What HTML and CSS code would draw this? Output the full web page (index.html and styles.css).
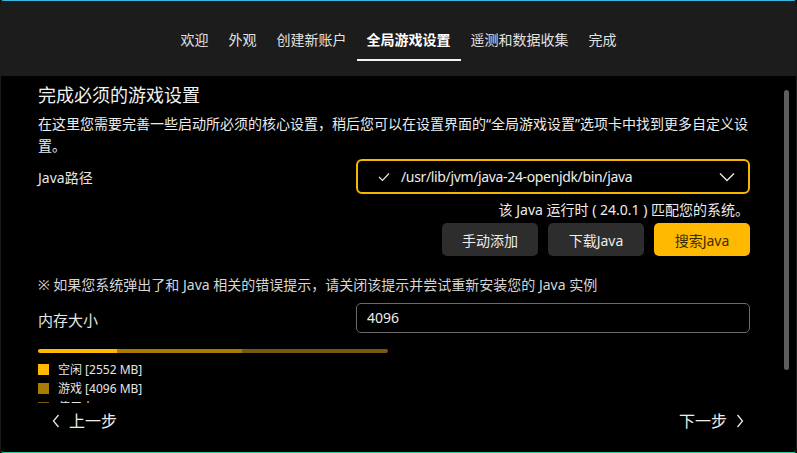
FILE: index.html
```html
<!DOCTYPE html>
<html lang="zh-CN">
<head>
<meta charset="utf-8">
<title>全局游戏设置</title>
<link rel="stylesheet" href="styles.css">
</head>
<body>
<div class="window">
  <header class="topbar">
    <nav class="tabs">
      <span class="tab">欢迎</span>
      <span class="tab">外观</span>
      <span class="tab">创建新账户</span>
      <span class="tab active">全局游戏设置</span>
      <span class="tab">遥测和数据收集</span>
      <span class="tab">完成</span>
    </nav>
  </header>
  <main class="content">
    <div class="scroll">
      <h1 class="title">完成必须的游戏设置</h1>
      <p class="desc">在这里您需要完善一些启动所必须的核心设置，稍后您可以在设置界面的“全局游戏设置”选项卡中找到更多自定义设置。</p>
      <div class="row java-row">
        <span class="label">Java路径</span>
        <div class="select">
          <svg class="check" width="12" height="10" viewBox="0 0 12 10"><polyline points="1,5 4.5,8.5 11,1.5" fill="none" stroke="#e8e8e8" stroke-width="1.2"/></svg>
          <span class="select-text">/usr/lib/jvm/java-24-openjdk/bin/java</span>
          <svg class="chev" width="16" height="10" viewBox="0 0 16 10"><polyline points="1,1.5 8,8.5 15,1.5" fill="none" stroke="#e8e8e8" stroke-width="1.4"/></svg>
        </div>
      </div>
      <p class="status">该 Java 运行时 ( 24.0.1 ) 匹配您的系统。</p>
      <div class="actions">
        <button class="btn">手动添加</button>
        <button class="btn">下载Java</button>
        <button class="btn primary">搜索Java</button>
      </div>
      <p class="note">※ 如果您系统弹出了和 Java 相关的错误提示，请关闭该提示并尝试重新安装您的 Java 实例</p>
      <div class="row mem-row">
        <span class="label mem-label">内存大小</span>
        <div class="input">4096</div>
      </div>
      <div class="membar">
        <span class="seg free" style="width:79px"></span>
        <span class="seg game" style="width:125px"></span>
        <span class="seg used" style="width:146px"></span>
      </div>
      <ul class="legend">
        <li><span class="sw free"></span>空闲 [2552 MB]</li>
        <li><span class="sw game"></span>游戏 [4096 MB]</li>
        <li><span class="sw used"></span>使用中 [4772 MB]</li>
      </ul>
    </div>
    <div class="thumb"></div>
  </main>
  <footer class="footer">
    <span class="nav-btn">
      <svg width="8" height="14" viewBox="0 0 8 14"><polyline points="6.5,1 1.5,7 6.5,13" fill="none" stroke="#e8e8e8" stroke-width="1.3"/></svg>
      上一步
    </span>
    <span class="nav-btn">
      下一步
      <svg width="8" height="14" viewBox="0 0 8 14"><polyline points="1.5,1 6.5,7 1.5,13" fill="none" stroke="#e8e8e8" stroke-width="1.3"/></svg>
    </span>
  </footer>
</div>
</body>
</html>
```

FILE: styles.css
```css
* { box-sizing: border-box; }
html, body {
  margin: 0;
  padding: 0;
  background: #000;
}
body {
  font-family: "Noto Sans", "Noto Sans CJK SC", sans-serif;
  color: #e6e6e6;
  font-size: 14px;
}
.window {
  width: 797px;
  height: 453px;
  border: 1px solid #1a1a1a;
  border-top-color: #3ab6dc;
  border-bottom-color: #1fcf9c;
  border-radius: 4px;
  overflow: hidden;
  display: flex;
  flex-direction: column;
  background: #000;
}
.topbar {
  height: 75px;
  flex: none;
  background: #1c1c1c;
  display: flex;
  justify-content: center;
  align-items: flex-start;
  padding-top: 29px;
}
.tabs {
  display: flex;
}
.tab {
  padding: 0 10px 9px;
  line-height: 20px;
  font-size: 14px;
  color: #e2e2e2;
  border-bottom: 2px solid transparent;
}
.tab.active {
  color: #fff;
  font-weight: 700;
  border-bottom-color: #f2f2f2;
}
.content {
  position: relative;
  height: 327px;
  flex: none;
  overflow: hidden;
}
.scroll {
  padding: 0 46px 0 37px;
}
.title {
  margin: 7px 0 0;
  font-size: 18px;
  line-height: 24px;
  font-weight: 400;
  color: #f2f2f2;
}
.desc {
  margin: 6px 0 0;
  line-height: 22px;
  color: #ececec;
}
.row {
  display: flex;
  align-items: center;
}
.label {
  width: 318px;
  flex: none;
  color: #e6e6e6;
}
.java-row {
  margin-top: 2px;
}
.select {
  flex: 1;
  height: 35px;
  border: 2px solid #f5b700;
  border-radius: 6px;
  display: flex;
  align-items: center;
  padding: 0 13px 0 20px;
}
.check { flex: none; }
.select-text {
  flex: 1;
  margin-left: 11px;
  color: #ededed;
  letter-spacing: -0.35px;
}
.chev { flex: none; }
.status {
  margin: 6px 0 0;
  line-height: 20px;
  text-align: right;
  padding-right: 1px;
  color: #ececec;
}
.actions {
  margin-top: 3px;
  display: flex;
  justify-content: flex-end;
  gap: 10px;
}
.btn {
  width: 96px;
  height: 33px;
  border: none;
  border-radius: 5px;
  background: #2d2d2d;
  color: #ececec;
  font-family: inherit;
  font-size: 14px;
  padding: 0;
}
.btn.primary {
  background: #ffb900;
  color: #3a2c00;
}
.note {
  margin: 19px 0 0;
  line-height: 20px;
  color: #d6d6d6;
}
.mem-row {
  margin-top: 8px;
}
.mem-label {
  font-size: 15px;
  padding-top: 3px;
}
.input {
  flex: 1;
  height: 30px;
  border: 1px solid #6a6a6a;
  border-radius: 5px;
  padding: 0 10px;
  line-height: 28px;
  color: #ededed;
}
.membar {
  margin-top: 16px;
  width: 350px;
  height: 4px;
  display: flex;
  border-radius: 2px;
  overflow: hidden;
}
.seg { display: block; height: 100%; }
.free { background: #ffb900; }
.game { background: #a97b00; }
.used { background: #785810; }
.legend {
  list-style: none;
  margin: 7px 0 0;
  padding: 0;
  font-size: 12px;
  line-height: 19px;
  color: #e6e6e6;
}
.legend li {
  display: flex;
  align-items: center;
}
.sw {
  width: 11px;
  height: 11px;
  margin-right: 9px;
  flex: none;
}
.thumb {
  position: absolute;
  right: 7px;
  top: 14px;
  width: 5px;
  height: 280px;
  border-radius: 3px;
  background: #5e5e5e;
}
.footer {
  flex: 1;
  display: flex;
  justify-content: space-between;
  align-items: flex-start;
  padding: 7px 52px 0 51px;
  font-size: 16px;
  line-height: 22px;
  color: #ededed;
}
.nav-btn {
  display: flex;
  align-items: center;
  gap: 9px;
}
```
